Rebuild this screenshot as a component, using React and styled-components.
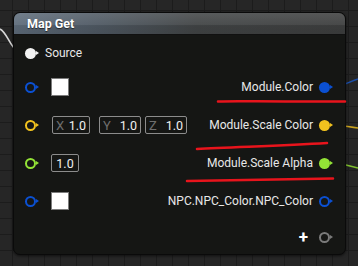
import React from 'react';
import styled, { createGlobalStyle } from 'styled-components';

const GlobalStyle = createGlobalStyle`
  html, body {
    margin: 0;
    padding: 0;
  }
  body {
    width: 358px;
    height: 266px;
    overflow: hidden;
    font-family: Roboto, "Liberation Sans", sans-serif;
    background-color: #262626;
    background-image:
      linear-gradient(to right, #1c1c1c 1px, transparent 1px),
      linear-gradient(to bottom, #1c1c1c 1px, transparent 1px);
    background-size: 16px 16px;
    background-position: 12px 10px;
  }
`;

const pinColors = {
  white: '#f2f2f2',
  blue: '#0b50d2',
  yellow: '#f2c21e',
  green: '#93e336',
  grey: '#7a7a7a',
};

const Canvas = styled.div`
  position: relative;
  width: 358px;
  height: 266px;
  padding: 12px 0 0 13px;
  box-sizing: border-box;
`;

const Node = styled.div`
  position: relative;
  z-index: 1;
  width: 333px;
  height: 243px;
  border-radius: 7px;
  background: #151614;
  border: 1px solid #0a0a0a;
  box-shadow: 0 1px 3px rgba(0, 0, 0, 0.6);
  box-sizing: border-box;
  overflow: hidden;
  display: flex;
  flex-direction: column;
`;

const Header = styled.div`
  height: 21px;
  flex-shrink: 0;
  display: flex;
  align-items: center;
  padding-left: 13px;
  color: #ffffff;
  font-size: 12.5px;
  font-weight: 700;
  background:
    linear-gradient(to bottom, rgba(255, 255, 255, 0.12) 0, rgba(255, 255, 255, 0.05) 55%, rgba(0, 0, 0, 0.08) 60%, rgba(0, 0, 0, 0.1) 100%),
    linear-gradient(to right, #5f6d7c 0, #505a64 25%, #424546 55%, #3e3f3f 100%);
  border-bottom: 1px solid #111;
  text-shadow: 0 1px 1px rgba(0, 0, 0, 0.6);
`;

const Body = styled.div`
  display: flex;
  flex-direction: column;
  padding: 3px 12px 0 11px;
`;

const Row = styled.div`
  height: ${(p) => p.h || 38}px;
  display: flex;
  align-items: center;
  justify-content: space-between;
  color: #e8e8e8;
  font-size: 12px;
`;

const Side = styled.div`
  display: flex;
  align-items: center;
  gap: ${(p) => p.gap || 0}px;
`;

const PinWrap = styled.div`
  position: relative;
  width: 14px;
  height: 11px;
  flex-shrink: 0;
`;

const PinDot = styled.div`
  width: ${(p) => (p.filled ? 11 : 7)}px;
  height: ${(p) => (p.filled ? 11 : 7)}px;
  border-radius: 50%;
  border: ${(p) => (p.filled ? 'none' : `2px solid ${p.color}`)};
  background: ${(p) => (p.filled ? p.color : 'transparent')};
`;

const PinArrow = styled.div`
  position: absolute;
  right: 0;
  top: 3px;
  width: 0;
  height: 0;
  border-top: 2.5px solid transparent;
  border-bottom: 2.5px solid transparent;
  border-left: 3px solid ${(p) => p.color};
`;

function Pin({ color, filled }) {
  const c = pinColors[color];
  return (
    <PinWrap>
      <PinDot color={c} filled={filled} />
      <PinArrow color={c} />
    </PinWrap>
  );
}

const Swatch = styled.div`
  width: 16px;
  height: 16px;
  background: #ffffff;
  border: 1px solid #7c7c7c;
`;

const ValueBox = styled.div`
  height: 16px;
  width: ${(p) => p.w}px;
  margin-left: ${(p) => p.ml || 0}px;
  border: 1px solid #8c8c8c;
  border-radius: 2px;
  display: flex;
  align-items: center;
  justify-content: ${(p) => (p.label ? 'space-between' : 'center')};
  padding: 0 3px;
  font-size: 12.5px;
  color: #f0f0f0;
  box-sizing: content-box;
`;

const AxisLabel = styled.span`
  color: #6e6e6e;
  font-size: 13px;
`;

const Plus = styled.span`
  color: #ffffff;
  font-size: 17px;
  font-weight: 700;
  line-height: 1;
  margin-right: 5px;
`;

const Overlay = styled.svg`
  position: absolute;
  left: 0;
  top: 0;
  pointer-events: none;
  z-index: ${(p) => p.layer};
`;

function VectorBoxes() {
  return (
    <Side>
      <ValueBox w={30} label>
        <AxisLabel>X</AxisLabel>1.0
      </ValueBox>
      <ValueBox w={34} ml={9} label>
        <AxisLabel>Y</AxisLabel>1.0
      </ValueBox>
      <ValueBox w={34} ml={4} label>
        <AxisLabel>Z</AxisLabel>1.0
      </ValueBox>
    </Side>
  );
}

export default function App() {
  return (
    <>
      <GlobalStyle />
      <Canvas>
        <Overlay width="358" height="266" layer={0}>
          <path d="M 0 29 C 8 33, 10 50, 22 53" stroke="#d6d6d6" strokeWidth="1.6" fill="none" />
          <path d="M 332 87 C 342 87, 348 82, 358 79" stroke="#1b4ea8" strokeWidth="1.5" fill="none" />
          <path d="M 332 125 C 342 125, 348 127, 358 128" stroke="#c9a21e" strokeWidth="1.5" fill="none" />
          <path d="M 332 163 C 342 163, 348 166, 358 168" stroke="#7fbf2e" strokeWidth="1.5" fill="none" />
        </Overlay>
        <Node>
          <Header>Map Get</Header>
          <Body>
            <Row h={30}>
              <Side gap={6}>
                <Pin color="white" filled />
                <span>Source</span>
              </Side>
            </Row>
            <Row>
              <Side gap={12}>
                <Pin color="blue" />
                <Swatch />
              </Side>
              <Side gap={6}>
                <span>Module.Color</span>
                <Pin color="blue" filled />
              </Side>
            </Row>
            <Row>
              <Side gap={13}>
                <Pin color="yellow" />
                <VectorBoxes />
              </Side>
              <Side gap={6}>
                <span>Module.Scale Color</span>
                <Pin color="yellow" filled />
              </Side>
            </Row>
            <Row>
              <Side gap={12}>
                <Pin color="green" />
                <ValueBox w={20}>1.0</ValueBox>
              </Side>
              <Side gap={6}>
                <span>Module.Scale Alpha</span>
                <Pin color="green" filled />
              </Side>
            </Row>
            <Row>
              <Side gap={12}>
                <Pin color="blue" />
                <Swatch />
              </Side>
              <Side gap={6}>
                <span>NPC.NPC_Color.NPC_Color</span>
                <Pin color="blue" />
              </Side>
            </Row>
            <Row h={34}>
              <span />
              <Side gap={6}>
                <Plus>+</Plus>
                <Pin color="grey" />
              </Side>
            </Row>
          </Body>
        </Node>
        <Overlay width="358" height="266" layer={2}>
          <path d="M 218 101.5 C 240 100.5, 260 102, 345 101.5" stroke="#e8141c" strokeWidth="2.5" fill="none" strokeLinecap="round" />
          <path d="M 197 149 C 230 147, 280 146, 327 143" stroke="#e8141c" strokeWidth="2.5" fill="none" strokeLinecap="round" />
          <path d="M 187 181 C 230 180, 290 179.5, 333 178.5" stroke="#e8141c" strokeWidth="2.5" fill="none" strokeLinecap="round" />
        </Overlay>
      </Canvas>
    </>
  );
}
